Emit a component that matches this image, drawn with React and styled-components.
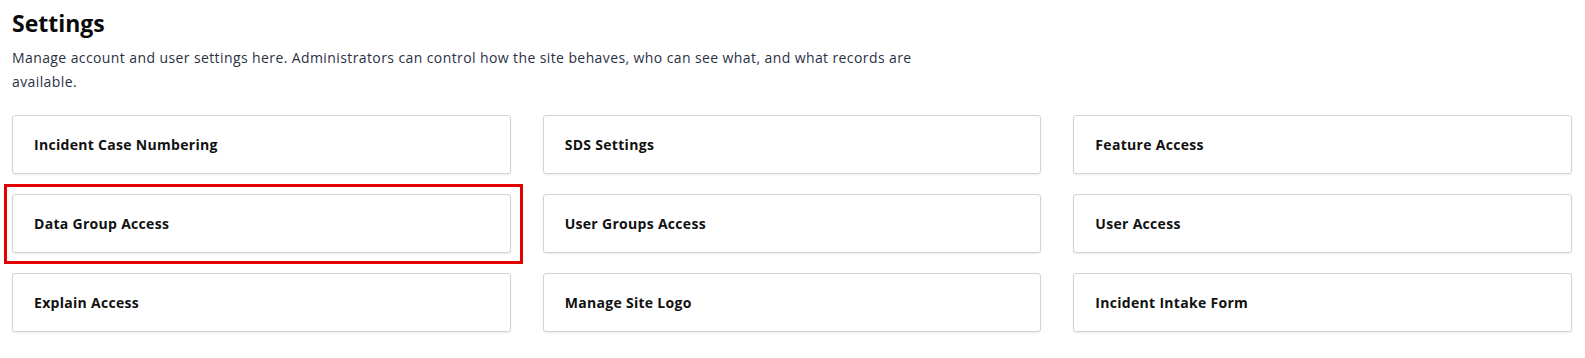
import React from "react";
import styled, { createGlobalStyle } from "styled-components";

const GlobalStyle = createGlobalStyle`
  body {
    margin: 0;
    background: #ffffff;
    font-family: "Open Sans", "Liberation Sans", sans-serif;
  }
`;

const SETTINGS = [
  { label: "Incident Case Numbering" },
  { label: "SDS Settings" },
  { label: "Feature Access" },
  { label: "Data Group Access", highlighted: true },
  { label: "User Groups Access" },
  { label: "User Access" },
  { label: "Explain Access" },
  { label: "Manage Site Logo" },
  { label: "Incident Intake Form" },
];

function App() {
  return (
    <Page>
      <GlobalStyle />
      <Title>Settings</Title>
      <Description>
        Manage account and user settings here. Administrators can control how
        the site behaves, who can see what, and what records are available.
      </Description>
      <Grid>
        {SETTINGS.map((item) => (
          <Card key={item.label} $highlighted={item.highlighted}>
            {item.label}
          </Card>
        ))}
      </Grid>
    </Page>
  );
}

export default App;

const Page = styled.div`
  padding: 8px 13px 20px 12px;
`;

const Title = styled.h1`
  margin: 0;
  font-size: 23px;
  line-height: 30px;
  font-weight: 700;
  color: #0a0a0a;
`;

const Description = styled.p`
  margin: 8px 0 0;
  max-width: 910px;
  font-size: 14px;
  line-height: 24px;
  letter-spacing: 0.4px;
  color: #2b3145;
`;

const Grid = styled.div`
  margin-top: 21px;
  display: grid;
  grid-template-columns: repeat(3, 1fr);
  column-gap: 32px;
  row-gap: 20px;
`;

const Card = styled.div`
  position: relative;
  height: 59px;
  box-sizing: border-box;
  display: flex;
  align-items: center;
  padding: 0 21px;
  border: 1px solid #d4d4d4;
  border-radius: 3px;
  box-shadow: 0 1px 2px rgba(0, 0, 0, 0.08);
  background: #fff;
  font-size: 14px;
  font-weight: 700;
  letter-spacing: 0.3px;
  color: #111;

  ${(p) =>
    p.$highlighted &&
    `
    &::after {
      content: "";
      position: absolute;
      top: -11px;
      left: -9px;
      right: -13px;
      bottom: -12px;
      border: 3px solid #e30000;
      pointer-events: none;
    }
  `}
`;
